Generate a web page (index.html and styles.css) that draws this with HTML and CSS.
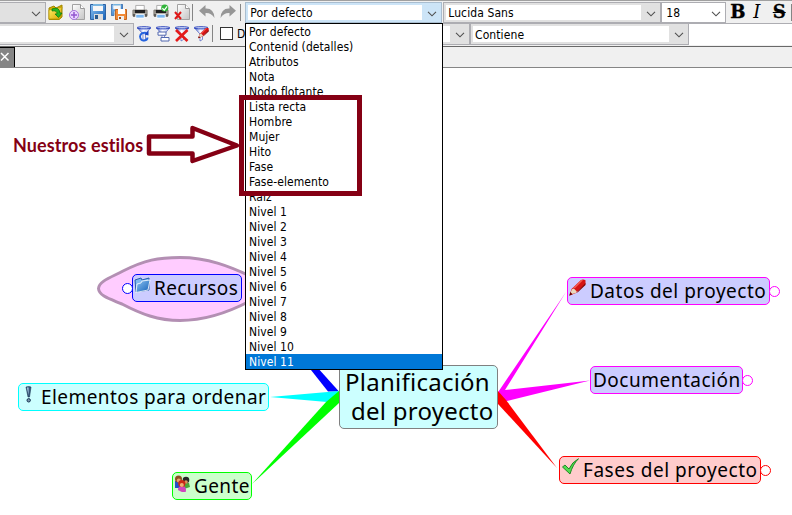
FILE: index.html
```
<!DOCTYPE html>
<html lang="es">
<head>
<meta charset="utf-8">
<title>Planificación del proyecto</title>
<link rel="stylesheet" href="styles.css">
</head>
<body>
<svg class="defs" width="0" height="0">
  <defs>
    <linearGradient id="gy" x1="0" y1="0" x2="1" y2="1"><stop offset="0" stop-color="#fff36a"/><stop offset="1" stop-color="#d9a400"/></linearGradient>
    <linearGradient id="gb" x1="0" y1="0" x2="1" y2="1"><stop offset="0" stop-color="#8fc4f2"/><stop offset="1" stop-color="#1461b8"/></linearGradient>
    <linearGradient id="gf" x1="0" y1="0" x2="1" y2="0"><stop offset="0" stop-color="#4a68d4"/><stop offset=".45" stop-color="#fff"/><stop offset="1" stop-color="#a9b8ee"/></linearGradient>
    <linearGradient id="gp" x1="0" y1="0" x2="1" y2="1"><stop offset="0" stop-color="#fff"/><stop offset="1" stop-color="#c4c4c4"/></linearGradient>
    <symbol id="chev" viewBox="0 0 10 6"><path d="M1 .8 5 4.8 9 .8" fill="none" stroke="#505050" stroke-width="1.1"/></symbol>
    <symbol id="page" viewBox="0 0 16 16"><path d="M3.5.5h8l4 4v11h-12z" fill="url(#gp)" stroke="#a2a2a2"/><path d="M11.500.5v4h4" fill="#fff" stroke="#999"/></symbol>
    <symbol id="disk" viewBox="0 0 16 16"><path d="M.5.5h15v15h-15z" fill="url(#gb)" stroke="#2e62a3"/><path d="M3 0h10v7H3z" fill="#f7f7f7"/><path d="M3 0h10v2H3z" fill="#77b4df"/><path d="M4 10h9v6H4z" fill="#ddd"/><path d="M5 11h3v4H5z" fill="#27588e"/></symbol>
    <symbol id="printer" viewBox="0 0 17 16"><path d="M4 1h9v6H4z" fill="#fff" stroke="#aaa"/><path d="M1 6h15v6H1z" fill="#aaa7a0" stroke="#77736c"/><path d="M3 6h11v3H3z" fill="#202020"/><path d="M1 10h15v3H1z" fill="#5c5a56"/><path d="M4 10.500h9v4H4z" fill="#78b5ef" stroke="#fff"/></symbol>
    <symbol id="funnel" viewBox="0 0 16 16"><path d="M1.500 2 7 8v7l2.500-1.500V8L14.500 2z" fill="url(#gf)" stroke="#4a5cbc" stroke-width=".7"/><ellipse cx="8" cy="1.800" rx="7" ry="1.100" fill="#dce6fa" stroke="#2038b8" stroke-width=".9"/></symbol>
    <symbol id="pencil" viewBox="0 0 17 17"><path d="M.5 16.500 2.500 10 12 1q2-1 4.500.2V5L7 14z" fill="#d51414"/><path d="m4 9 8-8 2 .2-8 8z" fill="#f35b51"/><path d="m9 12 7.500-8v2L8 14z" fill="#800000"/><path d="m1 15.500 1.800-5.300 2-.8 3 3-1 1.500z" fill="#ead9bd"/><path d="m.3 16.700 1-3.700 2.300 2.300z" fill="#6d0000"/></symbol>
  </defs>
</svg>

<header class="toolbars">
  <div class="bar bar-top">
    <div class="combo grey blank"><span></span><svg class="chev"><use href="#chev"/></svg></div>
    <div class="tools main-tools">
      <svg class="ic" viewBox="0 0 16 16"><path d="M1 4 6 2l2 2 6-3v12l-3 2.500H1z" fill="#d2ae00" stroke="#a28700"/><path d="m1 6 13-3-2 12H1z" fill="url(#gy)" stroke="#b49200" stroke-width=".7"/><path d="M4 5q7-3 8 4h2l-3.500 4.500L7 10h2Q9 6 4 7z" fill="#28b821" stroke="#08720b" stroke-width=".7"/></svg>
      <svg class="ic" viewBox="0 0 16 16"><use href="#page"/><circle cx="5" cy="11" r="4.500" fill="#ead6ff" stroke="#aa72df"/><path d="M5 8v6M2 11h6" stroke="#9355cf" stroke-width="1.500"/></svg>
      <svg class="ic" viewBox="0 0 16 16"><use href="#disk"/></svg>
      <svg class="ic" viewBox="0 0 16 16"><use href="#disk" width="12" height="12"/><path d="M4.500 5.500h11v10h-11z" fill="#f28b38" stroke="#c26622"/><path d="M7 5h7v5H7z" fill="#fff"/><path d="M7 12h6v4H7z" fill="#eee"/><path d="M8 13h2v2H8z" fill="#a04b12"/></svg>
      <svg class="ic" viewBox="0 0 17 16"><use href="#printer"/></svg>
      <svg class="ic" viewBox="0 0 17 16"><use href="#printer"/><circle cx="12.500" cy="3.800" r="3.800" fill="#32b43a"/><path d="m10 4 2 2 3-4" fill="none" stroke="#fff" stroke-width="1.300"/></svg>
      <svg class="ic" viewBox="0 0 16 16"><use href="#page"/><path d="m1 8 6 7M7 8l-6 7" stroke="#df1717" stroke-width="2"/></svg>
    </div>
    <i class="sep"></i>
    <div class="tools history">
      <svg class="ic" viewBox="0 0 16 16"><path d="M6.500 1v3.500Q15 4 15.500 14 12 8.500 6.500 9v3.500L0 6.700z" fill="#969696"/></svg>
      <svg class="ic" viewBox="0 0 16 16"><path d="M9.500 1v3.500Q1 4 .5 14 4 8.500 9.500 9v3.500L16 6.700z" fill="#969696"/></svg>
    </div>
    <i class="sep sep-b"></i>
    <div class="combo style-combo"><span>Por defecto</span><svg class="chev"><use href="#chev"/></svg></div>
    <div class="combo grey font-combo"><span>Lucida Sans</span><svg class="chev"><use href="#chev"/></svg></div>
    <div class="combo size-combo"><span>18</span><svg class="chev"><use href="#chev"/></svg></div>
    <div class="format"><b>B</b><em>I</em><s>S</s></div>
    <i class="sep sep-end"></i>
  </div>

  <div class="bar bar-filter">
    <div class="combo grey filter-combo"><span></span><svg class="chev"><use href="#chev"/></svg></div>
    <div class="tools filter-tools">
      <svg class="ic" viewBox="0 0 16 16"><use href="#funnel"/><path d="M10.500 7Q4.500 6 4 10.500 4.500 15 8.500 14.500q3-.5 3-3" fill="none" stroke="#2463df" stroke-width="1.900"/><path d="m8.500 8.500 4-4v5z" fill="#1745c5"/></svg>
      <svg class="ic" viewBox="0 0 16 16"><use href="#funnel"/><path d="M3 6h8v3.200H3zM6 11.500h8v3.500H6z" fill="#fff" stroke="#5268af"/></svg>
      <svg class="ic" viewBox="0 0 16 16"><use href="#funnel"/><path d="m2 4 11.500 11M13.500 4 2 15" stroke="#e41a1a" stroke-width="2.700"/></svg>
      <svg class="ic" viewBox="0 0 16 16"><use href="#funnel"/><use href="#pencil" x="5" y="1" width="11" height="12"/></svg>
    </div>
    <i class="sep sep-c"></i>
    <div class="check"><i></i>D</div>
    <div class="combo grey target-combo"><span></span><svg class="chev"><use href="#chev"/></svg></div>
    <div class="combo grey contains-combo"><span>Contiene</span><svg class="chev"><use href="#chev"/></svg></div>
    <div class="value"></div>
  </div>
  <div class="tabs"><div class="tab"><svg viewBox="0 0 10 10"><path d="m1 1 7.500 7.500M8.500 1 1 8.500" stroke="#fff" stroke-width="1.500"/></svg></div></div>
</header>

<main class="map">
  <svg class="links" width="792" height="447" viewBox="0 68 792 447">
    <path d="M98.500 288.500C99 281 112 277 123 271C145 260 158 257.500 180 257.500C208 257.500 231 267 250 276V301C231 311 208 320.500 180 320.500C158 320.500 141 314 122 304C110 299 99 296 98.500 288.500Z" fill="#fcf" stroke="#b38fb3" stroke-width="3"/>
    <path d="M246 288 339 391.500H328z" fill="#00f"/>
    <path d="M270 397 339 391v10l-12 1z" fill="#0ff"/>
    <path d="M252 484 326 402l13-11v12z" fill="#0f0"/>
    <path d="M497.500 393 566 292l-61 98 85-9.500-85 21z" fill="#f0f"/>
    <path d="M498 391 506 400 557 468 498 404z" fill="red"/>
  </svg>
  <div class="node recursos"><svg class="nic" viewBox="0 0 17 17"><path d="M1 3 7 1l1 2 7-2v12L2 15z" fill="#7eb8ef" stroke="#255da7"/><path d="m3 7 4-1 1-2 8-1-2 10-12 2.500z" fill="url(#gb)" stroke="#fff" stroke-width=".8"/></svg><span>Recursos</span><i class="fold"></i></div>
  <div class="node elementos"><svg class="nic" viewBox="0 0 17 17"><path d="M6 1q3-1 5 0L9.500 11H8z" fill="#39577c" stroke="#173452" stroke-width=".6"/><path d="M7 1.500h1.500V9z" fill="#b9ddf3"/><circle cx="8.700" cy="14.300" r="1.700" fill="#7896ad" stroke="#173452"/></svg><span>Elementos para ordenar</span></div>
  <div class="node gente"><svg class="nic" viewBox="0 0 17 17"><path d="M1 6h6v7H1z" fill="#2450c5"/><circle cx="4.500" cy="4" r="3.500" fill="#8d4f21"/><circle cx="4.800" cy="5.500" r="2" fill="#e5a66f"/><path d="M9 8h6l1 4-6 2z" fill="#4aa63a"/><circle cx="12" cy="5" r="3.300" fill="#252525"/><circle cx="12" cy="7" r="1.800" fill="#d8975e"/><path d="M4 15q0-4 4-4t4 4-4 2-4-2z" fill="#cf47bd"/><circle cx="7.800" cy="8.500" r="3.600" fill="#cb2918"/><circle cx="7.800" cy="10" r="2" fill="#efb078"/></svg><span>Gente</span></div>
  <div class="node root"><span class="l1">Planificación</span><span class="l2">del proyecto</span></div>
  <div class="node datos"><svg class="nic"><use href="#pencil"/></svg><span>Datos del proyecto</span><i class="fold"></i></div>
  <div class="node docu"><span>Documentación</span><i class="fold"></i></div>
  <div class="node fases"><svg class="nic" viewBox="0 0 17 17"><path d="M.5 9 3 7l4 4Q10 4 16.500.7 11 6 8 16z" fill="#50dc50" stroke="#16801c" stroke-width=".9"/></svg><span>Fases del proyecto</span><i class="fold"></i></div>
</main>

<ul class="menu">
  <li>Por defecto</li><li>Contenid (detalles)</li><li>Atributos</li><li>Nota</li><li>Nodo flotante</li><li>Lista recta</li><li>Hombre</li><li>Mujer</li><li>Hito</li><li>Fase</li><li>Fase-elemento</li><li>Raíz</li><li>Nivel 1</li><li>Nivel 2</li><li>Nivel 3</li><li>Nivel 4</li><li>Nivel 5</li><li>Nivel 6</li><li>Nivel 7</li><li>Nivel 8</li><li>Nivel 9</li><li>Nivel 10</li><li class="on">Nivel 11</li>
</ul>
<div class="frame"></div>
<div class="callout"><span>Nuestros estilos</span><svg width="94" height="42" viewBox="0 0 94 42"><path d="M3 13.500H46.500V5L91 22.500 46.500 38V30.500H3z" fill="#fff" stroke="#850014" stroke-width="4.500" stroke-linejoin="round"/></svg></div>
</body>
</html>
```
FILE: styles.css
```
* { box-sizing: border-box; }
body { margin: 0; width: 792px; height: 515px; overflow: hidden; position: relative; background: #fff; color: #000; font: 12px/15px "DejaVu Sans Condensed", "DejaVu Sans", sans-serif; font-stretch: condensed; }
.defs { position: absolute; }
.toolbars { height: 68px; background: #f0f0f0; border-top: 1px solid #a0a0a0; }
.bar { display: flex; }
.bar-top { height: 22px; padding-top: 1px; }
.bar-filter { height: 23px; }
.combo { display: flex; flex: none; height: 21px; border: 1px solid #adadb2; background: #fff; padding: 2px 0 2px 2px; }
.combo span { flex: 1; background: #fff; padding-left: 2px; line-height: 17px; letter-spacing: .1px; }
.combo.grey { background: #e1e1e1; }
.chev { width: 10px; height: 6px; margin: 6px 4px 0 5px; flex: none; }
.blank { width: 46px; border-left: 0; }
.combo.blank span { background: #e1e1e1; }
.tools { display: flex; align-items: center; height: 20px; }
.ic { width: 16px; height: 16px; flex: none; }
.main-tools { gap: 5px; padding-left: 2px; width: 147px; }
.sep { width: 1px; height: 17px; margin-top: 2px; background: #858585; flex: none; }
.history { gap: 5px; padding-left: 6px; width: 47px; }
.sep-b { margin-right: 4px; }
.style-combo { width: 197px; background: #cce4f7; border-color: #a9bdcf; }
.font-combo { width: 218px; margin-left: 1px; }
.font-combo span { padding-left: 2px; }
.size-combo { width: 65px; }
.format { display: flex; width: 66px; padding-left: 4px; font: bold 18px/20px "DejaVu Serif", serif; font-stretch: normal; }
.format b { width: 20px; font-stretch: normal; -webkit-text-stroke: .4px #000; }
.format em { width: 21px; padding-left: 3px; font-weight: 400; }
.format s { width: 16px; text-align: center; text-decoration-thickness: 1px; -webkit-text-stroke: .3px #000; }
.sep-end { margin-left: -1px; }
.filter-combo { width: 134px; height: 22px; border-left: 0; padding-left: 0; }
.filter-tools { width: 78px; gap: 3px; padding-left: 2px; height: 22px; }
.sep-c { margin-right: 7px; }
.check { display: flex; width: 80px; gap: 4px; line-height: 23px; }
.check i { width: 13px; height: 13px; margin-top: 4px; border: 1px solid #333; background: #fff; }
.target-combo { width: 170px; height: 22px; }
.contains-combo { width: 219px; height: 22px; }
.contains-combo span { line-height: 19px; }
.value { flex: 1; height: 22px; background: #fff; border-top: 1px solid #adadb2; }
.tabs { height: 22px; border-top: 1px solid #696969; border-bottom: 1px solid #858585; }
.tab { width: 15px; height: 20px; background: #858585; border: solid #000; border-width: 1px 1px 0 0; }
.tab svg { display: block; width: 10px; height: 10px; margin: 0 auto 0 0; transform: translateY(4px); }
.map { position: relative; height: 447px; }
.links { position: absolute; left: 0; top: 0; }
.node { position: absolute; height: 28px; border: 1px solid; border-radius: 5px; display: flex; white-space: nowrap; font: 19px/27px "Noto Sans", sans-serif; letter-spacing: .5px; }
.node span { color: #000; }
.nic { width: 17px; height: 17px; margin: 2px 3px 0 1px; flex: none; }
.fold { position: absolute; width: 11px; height: 11px; top: 8px; left: 100%; border: 1px solid; border-radius: 50%; background: #fff; }
.recursos { left: 132px; top: 206px; width: 110px; background: #ccf; color: #00f; letter-spacing: .4px; }
.recursos .fold { left: -11px; }
.elementos { left: 18px; top: 315px; width: 251px; background: #cff; color: #0ff; letter-spacing: .43px; }
.elementos .nic { margin-right: 4px; }
.gente { left: 172px; top: 404px; width: 80px; background: #cfc; color: #0f0; letter-spacing: .4px; }
.root { left: 339px; top: 297px; width: 159px; height: 64px; background: #cff; color: #808080; flex-direction: column; font-size: 24px; line-height: 29px; padding-top: 1px; letter-spacing: .25px; }
.l1 { padding-left: 5px; }
.l2 { padding-left: 11px; }
.datos { left: 567px; top: 209px; width: 203px; background: #ccf; color: #f0f; }
.datos .nic { margin: 1px 4px 0 1px; }
.docu { left: 590px; top: 298px; width: 153px; background: #ccf; color: #f0f; padding-left: 2px; }
.fases { left: 559px; top: 388px; width: 202px; background: #fcc; color: red; letter-spacing: .55px; }
.fases .nic { margin: 1px 4px 0 2px; }
.menu { position: absolute; left: 245px; top: 23px; width: 198px; height: 347px; margin: 0; padding: 0; list-style: none; background: #fff; border: 1px solid #000; }
.menu li { height: 15px; padding-left: 3px; line-height: 17px; letter-spacing: .07px; }
.menu .on { background: #0078d7; color: #fff; }
.frame { position: absolute; left: 239px; top: 95px; width: 123px; height: 101px; border: 5px solid #850014; }
.callout { position: absolute; left: 13px; top: 121px; display: flex; align-items: center; gap: 2px; color: #850014; font: bold 18px/42px "Lato", sans-serif; letter-spacing: .1px; }
.callout span { width: 131px; white-space: nowrap; padding-top: 3px; }
```
